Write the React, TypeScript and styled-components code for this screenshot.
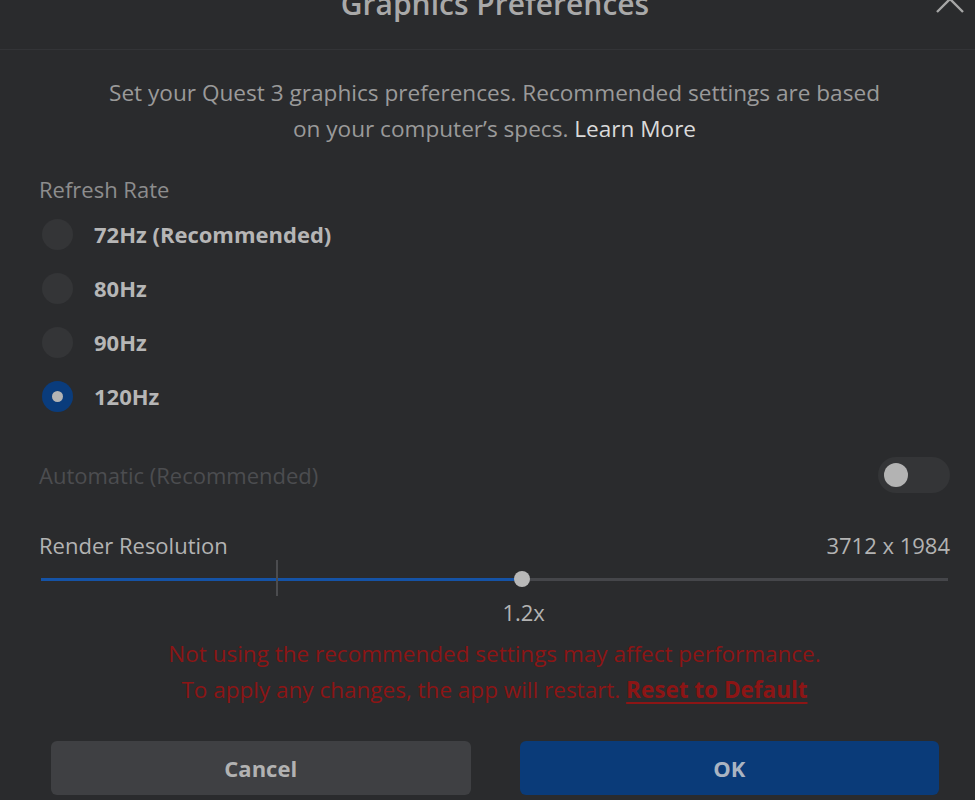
import React from "react";
import styled, { createGlobalStyle } from "styled-components";

const Global = createGlobalStyle`
  html, body { margin: 0; padding: 0; background: #2a2b2d; overflow: hidden; }
  body { font-family: "Open Sans", "Noto Sans", sans-serif; }
`;

const Dialog = styled.div`
  width: 990px;
  height: 800px;
  background: #2a2b2d;
  display: flex;
  flex-direction: column;
  overflow: hidden;
`;

const Header = styled.div`
  position: relative;
  height: 49px;
  border-bottom: 1px solid #333437;
  display: flex;
  justify-content: center;
  align-items: flex-start;
  flex-shrink: 0;
`;

const Title = styled.h1`
  margin: -14px 0 0;
  font-size: 30px;
  font-weight: 600;
  line-height: 36px;
  color: #a9a9a9;
`;

const Close = styled.button`
  position: absolute;
  right: 25px;
  top: -16px;
  width: 30px;
  height: 30px;
  padding: 0;
  border: 0;
  background: none;
  color: #a6a6a6;
`;

const Body = styled.div`
  padding: 25px 40px 0 39px;
  display: flex;
  flex-direction: column;
`;

const Description = styled.p`
  margin: 0;
  text-align: center;
  font-size: 22.6px;
  line-height: 36px;
  color: #9a9a9a;
  white-space: nowrap;
`;

const Link = styled.a`
  color: #dadada;
  text-decoration: none;
`;

const SectionLabel = styled.div<{ $dim?: boolean }>`
  font-size: 22px;
  line-height: 28px;
  color: ${(p) => (p.$dim ? "#4c4d50" : "#8d8d8d")};
`;

const RadioList = styled.div`
  margin-top: 4px;
  display: flex;
  flex-direction: column;
`;

const RadioRow = styled.label`
  height: 54px;
  display: flex;
  align-items: center;
  gap: 21px;
  padding-left: 3px;
`;

const RadioDot = styled.span<{ $on?: boolean }>`
  width: 31px;
  height: 31px;
  border-radius: 50%;
  background: ${(p) => (p.$on ? "#0a3c7c" : "#343537")};
  display: flex;
  align-items: center;
  justify-content: center;
  &::after {
    content: "";
    display: ${(p) => (p.$on ? "block" : "none")};
    width: 11px;
    height: 11px;
    border-radius: 50%;
    background: #b4b4b4;
  }
`;

const RadioText = styled.span`
  font-size: 22px;
  font-weight: 700;
  color: #b6b6b6;
`;

const SpreadRow = styled.div<{ $mt: number }>`
  margin-top: ${(p) => p.$mt}px;
  display: flex;
  align-items: center;
  justify-content: space-between;
`;

const Toggle = styled.span`
  width: 72px;
  height: 36px;
  border-radius: 18px;
  background: #343537;
  display: flex;
  align-items: center;
  padding-left: 6px;
  box-sizing: border-box;
  &::before {
    content: "";
    width: 24px;
    height: 24px;
    border-radius: 50%;
    background: #b3b3b3;
  }
`;

const PlainText = styled.span`
  font-size: 22px;
  line-height: 28px;
  color: #b3b3b3;
`;

const Slider = styled.div`
  position: relative;
  margin: 2px 2px 0 2px;
  height: 36px;
  display: flex;
  align-items: center;
`;

const Track = styled.div`
  position: relative;
  width: 100%;
  height: 3px;
  background: #45464a;
`;

const Fill = styled.div`
  position: absolute;
  left: 0;
  top: 0;
  bottom: 0;
  background: #1553a6;
`;

const Tick = styled.div`
  position: absolute;
  top: -18px;
  width: 2px;
  height: 36px;
  background: #4b4c4f;
`;

const Thumb = styled.div`
  position: absolute;
  top: -7px;
  width: 16px;
  height: 16px;
  margin-left: -8px;
  border-radius: 50%;
  background: #b8b8b8;
`;

const ValueRow = styled.div`
  position: relative;
  height: 30px;
`;

const Value = styled.span`
  position: absolute;
  top: 0;
  transform: translateX(-50%);
  font-size: 22px;
  line-height: 30px;
  color: #b3b3b3;
`;

const Warning = styled.p`
  margin: 9px 0 0;
  text-align: center;
  font-size: 22.5px;
  line-height: 36px;
  color: #8c1515;
  white-space: nowrap;
`;

const ResetLink = styled.a`
  color: #8c1515;
  font-weight: 700;
  text-decoration: underline;
  text-decoration-thickness: 2px;
  text-underline-offset: 4px;
`;

const Footer = styled.div`
  margin-top: 33px;
  padding: 0 51px;
  display: grid;
  grid-template-columns: 1fr 1fr;
  gap: 49px;
`;

const Button = styled.button<{ $primary?: boolean }>`
  height: 54px;
  border: 0;
  border-radius: 6px;
  background: ${(p) => (p.$primary ? "#0a3b79" : "#3f4043")};
  color: ${(p) => (p.$primary ? "#aab4c2" : "#b2b2b2")};
  font-family: inherit;
  font-size: 22px;
  font-weight: 700;
`;

const rates = ["72Hz (Recommended)", "80Hz", "90Hz", "120Hz"];

export default function App() {
  const pct = (480 / 906) * 100;
  const tickPct = (235 / 906) * 100;
  return (
    <>
      <Global />
      <Dialog>
        <Header>
          <Title>Graphics Preferences</Title>
          <Close aria-label="Close">
            <svg width="30" height="30" viewBox="0 0 30 30">
              <path d="M2 2 L28 28 M28 2 L2 28" stroke="currentColor" strokeWidth="2.4" fill="none" />
            </svg>
          </Close>
        </Header>
        <Body>
          <Description>
            Set your Quest 3 graphics preferences. Recommended settings are based
            <br />
            on your computer’s specs. <Link href="#">Learn More</Link>
          </Description>
          <SectionLabel style={{ marginTop: 28 }}>Refresh Rate</SectionLabel>
          <RadioList>
            {rates.map((r, i) => (
              <RadioRow key={r}>
                <RadioDot $on={i === 3} />
                <RadioText>{r}</RadioText>
              </RadioRow>
            ))}
          </RadioList>
          <SpreadRow $mt={34}>
            <SectionLabel $dim>Automatic (Recommended)</SectionLabel>
            <Toggle />
          </SpreadRow>
          <SpreadRow $mt={38}>
            <PlainText>Render Resolution</PlainText>
            <PlainText>3712 x 1984</PlainText>
          </SpreadRow>
          <Slider>
            <Track>
              <Fill style={{ width: `${pct}%` }} />
              <Tick style={{ left: `${tickPct}%` }} />
              <Thumb style={{ left: `${pct}%` }} />
            </Track>
          </Slider>
          <ValueRow>
            <Value style={{ left: `calc(2px + ${pct}% )` }}>1.2x</Value>
          </ValueRow>
          <Warning>
            Not using the recommended settings may affect performance.
            <br />
            To apply any changes, the app will restart. <ResetLink href="#">Reset to Default</ResetLink>
          </Warning>
        </Body>
        <Footer>
          <Button>Cancel</Button>
          <Button $primary>OK</Button>
        </Footer>
      </Dialog>
    </>
  );
}
